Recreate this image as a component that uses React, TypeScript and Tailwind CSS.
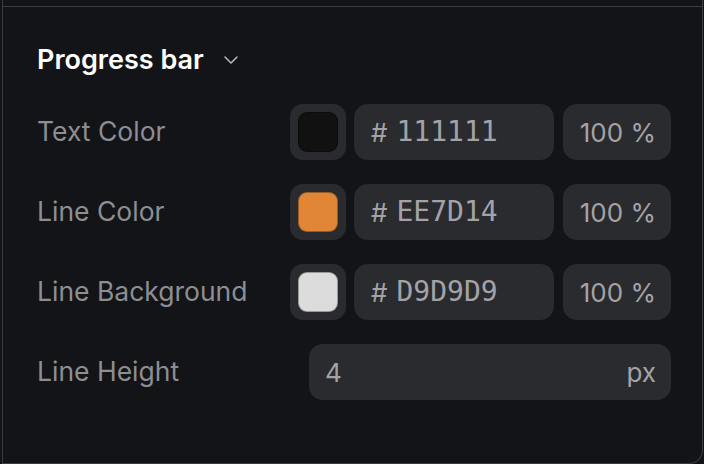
import { ChevronDown } from 'lucide-react';

type ColorRow = { label: string; hex: string; swatch: string };

const rows: ColorRow[] = [
  { label: 'Text Color', hex: '111111', swatch: 'bg-[#111111]' },
  { label: 'Line Color', hex: 'EE7D14', swatch: 'bg-[#e08636]' },
  { label: 'Line Background', hex: 'D9D9D9', swatch: 'bg-[#dcdcdc]' },
];

function Label({ children }: { children: string }) {
  return <span className="text-[26.5px] text-[#8d8e92]">{children}</span>;
}

function ColorField({ row }: { row: ColorRow }) {
  return (
    <div className="flex h-14 items-center justify-between">
      <Label>{row.label}</Label>
      <div className="flex items-center">
        <div className="flex h-14 w-14 items-center justify-center rounded-[13px] bg-[#2a2b2f]">
          <div className={`h-10 w-10 rounded-[9px] border border-black/30 ${row.swatch}`} />
        </div>
        <div className="ml-2 flex h-14 w-[200px] items-center gap-[9px] rounded-[14px] bg-[#2a2b2f] pl-[17px] text-[#a3a3a7]">
          <span className="text-[26px]">#</span>
          <span className="font-['DejaVu_Sans_Mono',monospace] text-[28px]">{row.hex}</span>
        </div>
        <div className="ml-[9px] flex h-14 w-[108px] items-center justify-end rounded-[14px] bg-[#2a2b2f] pr-[15px] text-[26px] text-[#a3a3a7]">
          100 %
        </div>
      </div>
    </div>
  );
}

export default function App() {
  return (
    <div className="h-[464px] w-[704px] bg-[#131418] pl-[2px] font-['Inter',sans-serif]">
      <div className="h-[464px] w-[701px] rounded-br-[14px] border-x border-b border-[#3b3c40] bg-[#131418] pt-[6px]">
        <div className="border-t border-[#3b3c40] pl-[34px] pr-[31px] pt-[33px]">
          <div className="flex h-10 items-center gap-[15px]">
            <h2 className="text-[27px] font-semibold text-white">Progress bar</h2>
            <ChevronDown className="h-6 w-6 text-[#b8b9bc]" strokeWidth={1.5} />
          </div>
          <div className="mt-6 flex flex-col gap-6">
            {rows.map((row) => (
              <ColorField key={row.label} row={row} />
            ))}
            <div className="flex h-14 items-center justify-between">
              <Label>Line Height</Label>
              <div className="flex h-14 w-[362px] items-center justify-between rounded-[14px] bg-[#2a2b2f] pl-[16px] pr-[15px] text-[26px] text-[#a3a3a7]">
                <span>4</span>
                <span>px</span>
              </div>
            </div>
          </div>
        </div>
      </div>
    </div>
  );
}
